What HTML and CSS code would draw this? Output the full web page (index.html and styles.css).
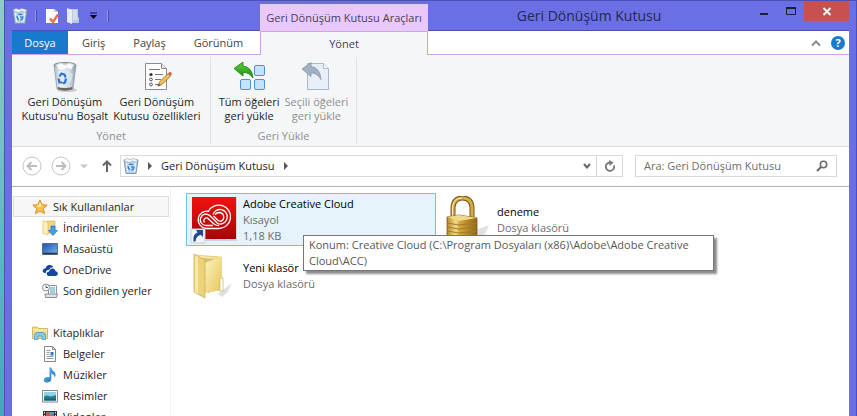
FILE: index.html
```html
<!DOCTYPE html>
<html lang="tr">
<head>
    <meta charset="UTF-8">
    <meta name="viewport" content="width=device-width, initial-scale=1.0">
    <title>Geri Dönüşüm Kutusu</title>
    <link rel="stylesheet" href="styles.css">
</head>
<body>

    <svg class="defs" aria-hidden="true">
        <defs>
            <linearGradient id="glass" x1="0" y1="0" x2="1" y2="0">
                <stop offset="0" stop-color="#a9b6c0"/>
                <stop offset=".3" stop-color="#eef4f8"/>
                <stop offset=".7" stop-color="#cfdde8"/>
                <stop offset="1" stop-color="#8d9aa5"/>
            </linearGradient>
            <linearGradient id="red" x1="0" y1="0" x2="0" y2="1">
                <stop offset="0" stop-color="#f0130f"/>
                <stop offset="1" stop-color="#a80507"/>
            </linearGradient>
            <linearGradient id="gold" x1="0" y1="0" x2="1" y2="0">
                <stop offset="0" stop-color="#b98a2c"/>
                <stop offset=".3" stop-color="#f3dc8c"/>
                <stop offset=".42" stop-color="#d3a63e"/>
                <stop offset="1" stop-color="#8f6418"/>
            </linearGradient>
            <linearGradient id="folder" x1="0" y1="0" x2="1" y2="1">
                <stop offset="0" stop-color="#fdf3bd"/>
                <stop offset="1" stop-color="#e6c65f"/>
            </linearGradient>
            <linearGradient id="green" x1="0" y1="0" x2="0" y2="1">
                <stop offset="0" stop-color="#5fd03a"/>
                <stop offset="1" stop-color="#1c8c12"/>
            </linearGradient>
            <linearGradient id="screen" x1="0" y1="0" x2="1" y2="1">
                <stop offset="0" stop-color="#1c4fb0"/>
                <stop offset="1" stop-color="#7db4ee"/>
            </linearGradient>
            <linearGradient id="note" x1="0" y1="0" x2="1" y2="1">
                <stop offset="0" stop-color="#6cc4f2"/>
                <stop offset="1" stop-color="#1668b8"/>
            </linearGradient>
            <symbol id="bin" viewBox="0 0 16 16">
                <path d="M1 2h14l-2 13.500H3z" fill="#b5d3ea" stroke="#7d95a8"/>
                <path d="M1 2l3-1.500 3 1L10 .5l5 1.500-2.500 2-3-1-3 1.500L3 3.500z" fill="#f4f8fb" stroke="#93a5b3" stroke-width=".6"/>
                <path d="M3.500 5l1 9M12.500 5l-1 9" stroke="#eaf4fb" stroke-width="1.200"/>
                <circle cx="8" cy="9" r="2.800" fill="#d8e9f6" stroke="#3a7fd6" stroke-width="1.500" stroke-dasharray="4 1.500"/>
                <path d="M8 9h2" stroke="#3a7fd6" stroke-width="1.500"/>
            </symbol>
        </defs>
    </svg>

    <div class="window">
        <header class="top">
            <div class="quick">
                <svg class="icon" viewBox="0 0 16 16"><use href="#bin"/></svg>
                <span class="bar"></span>
                <button type="button" aria-label="Özellikler">
                    <svg class="icon" viewBox="0 0 16 16"><path d="M2 1h8l4 3v11H2z" fill="#fdfdfd"/><path d="M10 1v3h4z" fill="#c9cbd8"/><path d="M6 10.500l3 3.500 5-7.500" fill="none" stroke="#ea7140" stroke-width="2.500"/></svg>
                </button>
                <button type="button" aria-label="Yeni klasör">
                    <svg class="icon" viewBox="0 0 16 16"><path d="M5 1h9v8l1 1v5H5z" fill="#b9cbe0"/><path d="M3 0l5 2v14l-5-2z" fill="#e6edf5"/><path d="M9 2h4v10H9z" fill="#d2deeb"/></svg>
                </button>
                <button type="button" class="more" aria-label="Hızlı erişimi özelleştir">
                    <svg class="arrow" viewBox="0 0 9 8"><path d="M1 1h7" stroke="#16163a"/><path d="M1 3h7L4.500 7z" fill="#000"/></svg>
                </button>
                <span class="bar"></span>
            </div>
            <div class="context">Geri Dönüşüm Kutusu Araçları</div>
            <div class="caption">
                <h1>Geri Dönüşüm Kutusu</h1>
                <div class="controls">
                    <button type="button" class="ctl" aria-label="Simge durumuna küçült"><svg class="glyph" viewBox="0 0 12 12"><path d="M2 9h8" stroke="#1d1d3c" stroke-width="2"/></svg></button>
                    <button type="button" class="ctl" aria-label="Ekranı kapla"><svg class="glyph" viewBox="0 0 12 12"><path d="M1.500 3v6.500h9V2.500h-9" fill="none" stroke="#1d1d3c"/><path d="M1 3h10" stroke="#1d1d3c" stroke-width="2"/></svg></button>
                    <button type="button" class="ctl close" aria-label="Kapat"><svg class="glyph" viewBox="0 0 12 12"><path d="M2.500 3l7 7M9.500 3l-7 7" stroke="#fff" stroke-width="1.800"/></svg></button>
                </div>
            </div>
            <nav class="tabs">
                <button type="button" class="tab file">Dosya</button>
                <button type="button" class="tab">Giriş</button>
                <button type="button" class="tab">Paylaş</button>
                <button type="button" class="tab">Görünüm</button>
            </nav>
            <button type="button" class="tab active">Yönet</button>
            <div class="tools">
                <button type="button" aria-label="Şeridi simge durumuna küçült"><svg class="chevron" viewBox="0 0 10 8"><path d="M1 6.500l4-4 4 4" fill="none" stroke="#8a8a8a" stroke-width="2"/></svg></button>
                <button type="button" class="help" aria-label="Yardım">?</button>
            </div>
        </header>

        <section class="ribbon">
            <div class="group">
                <div class="actions">
                    <button type="button" class="action">
                        <svg class="big" viewBox="0 0 32 32">
                            <ellipse cx="18" cy="29" rx="10" ry="2" fill="#c9cdd1"/>
                            <path d="M5 4h22l-3 24q-8 3-16 0z" fill="url(#glass)" stroke="#8f9ba5" stroke-width=".7"/>
                            <ellipse cx="16" cy="4" rx="11" ry="2.500" fill="#b7c3cc" stroke="#84919b"/>
                            <path d="M7 4l5-2 4 2 4-2 5 2-3 5-4-2-5 3-4-2z" fill="#f7fafc" stroke="#c2ced7" stroke-width=".6"/>
                            <path d="M9 11l5 3 4-4 6 3-2 8-5-3-3 5-4-6z" fill="#dde8f0" opacity=".8"/>
                            <path d="M8.500 26q7.500 2 15 0l-.4 2.200q-7 2.400-14.200 0z" fill="#6e6763"/>
                            <path d="M10.500 15.500l2-3 3 1 1 3M9.500 17.500l1 4h3M17 17.500l-1 4-2 1" fill="none" stroke="#2f6fd2" stroke-width="2.200"/>
                        </svg>
                        <span>Geri Dönüşüm<br>Kutusu'nu Boşalt</span>
                    </button>
                    <button type="button" class="action">
                        <svg class="big" viewBox="0 0 32 32">
                            <path d="M4.500 2.500h16l5 5v21h-21z" fill="#fdfdfd" stroke="#8b8b8b"/>
                            <path d="M20.500 2.500v5h5" fill="#e6e6e6" stroke="#8b8b8b"/>
                            <path d="M8 8.500h11M14 13.500h8M14 18.500h6M14 23.500h4" stroke="#777"/>
                            <circle cx="10" cy="13.500" r="1.600" fill="#333"/>
                            <circle cx="10" cy="18.500" r="1.400" fill="#fff" stroke="#555"/>
                            <circle cx="10" cy="23.500" r="1.400" fill="#fff" stroke="#555"/>
                            <path d="M17 25l1.500-4L27 12.500l2.500 2.500L21 23.500z" fill="#f4c257" stroke="#8a6224" stroke-width=".8"/>
                            <path d="M27 12.500l1.500-1.500q1.500-.5 2.500 1.500l-1.500 2.500z" fill="#dc5a55"/>
                            <path d="M17 25l.8-2 1.200 1.200z" fill="#222"/>
                        </svg>
                        <span>Geri Dönüşüm<br>Kutusu özellikleri</span>
                    </button>
                </div>
                <div class="label">Yönet</div>
            </div>
            <div class="group">
                <div class="actions">
                    <button type="button" class="action">
                        <svg class="big" viewBox="0 0 32 32">
                            <g fill="#c5e3fb" stroke="#4d92d6"><rect x="21.500" y="4.500" width="10" height="10" rx="1.500"/><rect x="7.500" y="18.500" width="10" height="10" rx="1.500"/><rect x="21.500" y="18.500" width="10" height="10" rx="1.500"/></g>
                            <path d="M1 7.500L10 1v4q9 1 10 12-4-6-10-5.500V15z" fill="url(#green)" stroke="#1c7d14" stroke-width=".8"/>
                        </svg>
                        <span>Tüm öğeleri<br>geri yükle</span>
                    </button>
                    <button type="button" class="action" disabled>
                        <svg class="big" viewBox="0 0 32 32">
                            <path d="M7.500 2.500h16l5 5v21h-21z" fill="#e9eff8" stroke="#abb8cd"/>
                            <path d="M23.500 2.500v5h5" fill="#f8fafd" stroke="#abb8cd"/>
                            <path d="M2 8L11 1.500v4q9 1 10 13-4-7-10-6.500v3.500z" fill="#a3afc3" stroke="#8794ab" stroke-width=".8"/>
                        </svg>
                        <span>Seçili öğeleri<br>geri yükle</span>
                    </button>
                </div>
                <div class="label">Geri Yükle</div>
            </div>
        </section>

        <div class="navbar">
            <button type="button" aria-label="Geri"><svg class="round" viewBox="0 0 20 20"><circle cx="10" cy="10" r="9" fill="none" stroke="#c6c6c6"/><path d="M15 10H6M9.500 6L5.500 10l4 4" fill="none" stroke="#bdbdbd" stroke-width="2"/></svg></button>
            <button type="button" aria-label="İleri"><svg class="round" viewBox="0 0 20 20"><circle cx="10" cy="10" r="9" fill="none" stroke="#c6c6c6"/><path d="M5 10h9M10.500 6l4 4-4 4" fill="none" stroke="#bdbdbd" stroke-width="2"/></svg></button>
            <button type="button" aria-label="Son konumlar"><svg class="drop" viewBox="0 0 8 8"><path d="M0 2.500h8l-4 4z" fill="#c8c8c8"/></svg></button>
            <button type="button" class="up" aria-label="Yukarı"><svg class="uparrow" viewBox="0 0 10 14"><path d="M5 13V3M1 6.500l4-4 4 4" fill="none" stroke="#666" stroke-width="2"/></svg></button>
            <div class="address">
                <svg class="icon" viewBox="0 0 16 16"><use href="#bin"/></svg>
                <svg class="crumb" viewBox="0 0 6 8"><path d="M1 0l4 4-4 4z" fill="#555"/></svg>
                <a href="#">Geri Dönüşüm Kutusu</a>
                <svg class="crumb" viewBox="0 0 6 8"><path d="M1 0l4 4-4 4z" fill="#555"/></svg>
                <button type="button" class="history" aria-label="Önceki konumlar"><svg class="drop" viewBox="0 0 8 8"><path d="M1 2l3 3.500L7 2" fill="none" stroke="#666" stroke-width="2"/></svg></button>
                <button type="button" class="refresh" aria-label="Yenile"><svg class="glyph" viewBox="0 0 12 12"><path d="M10 5.500A4.200 4.200 0 1 1 6 2.500" fill="none" stroke="#777" stroke-width="1.800"/><path d="M5 0l4.500 2.500L5.500 6z" fill="#777"/></svg></button>
            </div>
            <div class="search">
                <input type="text" aria-label="Ara" placeholder="Ara: Geri Dönüşüm Kutusu">
                <svg class="glyph" viewBox="0 0 12 12"><circle cx="7.500" cy="4.500" r="3.200" fill="none" stroke="#6d6d6d" stroke-width="1.600"/><path d="M5 7L1 11" stroke="#6d6d6d" stroke-width="2.200"/></svg>
            </div>
        </div>

        <div class="content">
            <nav class="sidebar">
                <ul>
                    <li><a href="#" class="root selected"><svg class="icon" viewBox="0 0 16 16"><path d="M8 1l2.100 4.700 5.100.5-3.900 3.400 1.200 5L8 12l-4.500 2.600 1.200-5L.8 6.200l5.100-.5z" fill="#fbc24a" stroke="#e08a26" stroke-linejoin="round"/><path d="M8 3l1.500 3.500L8 8 4 7l2.500-.5z" fill="#fff1b5"/></svg>Sık Kullanılanlar</a></li>
                    <li><a href="#"><svg class="icon" viewBox="0 0 16 16"><path d="M5 1h8v12H5z" fill="#f0d683" stroke="#c9a94d" stroke-width=".6"/><path d="M1 .5l5 2V15l-5-1.500z" fill="#fbf0ba" stroke="#d3b760" stroke-width=".6"/><path d="M9 6h4v4.500h2.500L11 15.500l-4.500-5H9z" fill="#3fa4e4" stroke="#1c71b5" stroke-width=".7"/></svg>İndirilenler</a></li>
                    <li><a href="#"><svg class="icon" viewBox="0 0 16 16"><path d="M.5 2.500h15v11H.5z" fill="url(#screen)" stroke="#586f8c"/><path d="M1 12.500h14" stroke="#24364e" stroke-width="1.500"/></svg>Masaüstü</a></li>
                    <li><a href="#"><svg class="icon" viewBox="0 0 16 16"><path d="M3 11Q.3 10.500.8 8.200 1.400 6.200 3.600 6.300 4.600 2.500 8.300 3q2.300.3 3.200 2.400-3-.3-4.300 2.300-3.600.4-3.400 3.500z" fill="#1447a0"/><path d="M6.500 14q-2-.3-1.900-2.500.4-2 2.500-2 1-3.500 4-3 2.200.5 2.500 2.800 2.300.3 2.300 2.500-.2 2-2.200 2.200z" fill="#1447a0"/></svg>OneDrive</a></li>
                    <li><a href="#"><svg class="icon" viewBox="0 0 16 16"><path d="M6.500 2.500h8v9h-8z" fill="#eef3f7" stroke="#8a949c"/><path d="M8 5h5M8 7h5M8 9h5" stroke="#63a5cf"/><path d="M3 11h12.500l-1 3.500H3.500z" fill="#dfe3e6" stroke="#868d93"/><circle cx="4" cy="4.500" r="3.500" fill="#f5f6f7" stroke="#8b9095"/><path d="M4 2.500v2h2" fill="none" stroke="#555"/></svg>Son gidilen yerler</a></li>
                </ul>
                <ul>
                    <li><a href="#" class="root"><svg class="icon" viewBox="0 0 16 16"><path d="M.5 2h5l1 1.500h9v10H.5z" fill="#f3dd8a" stroke="#c9ab52" stroke-width=".8"/><path d="M1 5h14" stroke="#fdf5c9"/><path d="M2.500 14.500v-4q0-3 3-3h5q3 0 3 3v4h-3.500v-3.500h-4v3.500z" fill="#86cdf0" stroke="#3b93c7" stroke-width=".8"/></svg>Kitaplıklar</a></li>
                    <li><a href="#"><svg class="icon" viewBox="0 0 16 16"><path d="M2.500.5h8l3 3v12h-11z" fill="#fff" stroke="#808890"/><path d="M10.500.5v3h3" fill="none" stroke="#808890"/><path d="M4.500 4.500h4M4.500 6.500h3M4.500 8.500h3M4.500 10.500h7M4.500 12.500h7" stroke="#8f9aa5"/><path d="M8.500 6h3v3.500h-3z" fill="#2f78bd"/></svg>Belgeler</a></li>
                    <li><a href="#"><svg class="icon" viewBox="0 0 16 16"><path d="M7.500.5h1.800q.3 2.300 2.700 4 2.600 2.500.7 6.500.2-3.500-3.400-4.500V12q-.2 3-3.700 3.500-3.800.2-3.900-2.300.3-3 4-3.200l1.800.2z" fill="url(#note)"/></svg>Müzikler</a></li>
                    <li><a href="#"><svg class="icon" viewBox="0 0 16 16"><path d="M.5 2.500h15v11.500H.5z" fill="#fff" stroke="#808890"/><path d="M2 4h12v8.500H2z" fill="#8fd0ef"/><path d="M2 8.500q3-2 6 0 3-.5 6-1.500v5.500H2z" fill="#2c8077"/><path d="M2 10.500h12v2H2z" fill="#1b5c95"/></svg>Resimler</a></li>
                    <li><a href="#"><svg class="icon" viewBox="0 0 16 16"><path d="M1 2h14v12H1z" fill="#2b3138"/><path d="M4 3h8v10H4z" fill="#4b9bd2"/><path d="M4 3h3l2 4 3-3v6H4z" fill="#c35c48"/><path d="M2.500 3v10M13.500 3v10" stroke="#e8edf0" stroke-dasharray="1.500 1.500"/></svg>Videolar</a></li>
                </ul>
            </nav>

            <main class="files">
                <div class="item hover">
                    <svg class="thumb" viewBox="0 0 48 48">
                        <path d="M3 2h44v43H3z" fill="#b9c3c9" opacity=".6"/>
                        <path d="M2 1h44v42H2z" fill="url(#red)"/>
                        <g fill="none" stroke="#fff" stroke-width="1.300">
                            <path d="M16 32.500H29A11.700 11.700 0 1 0 18.500 15.300 8.700 8.700 0 1 0 16 32.500"/>
                            <path d="M23 29.500H16a5.700 5.700 0 1 1 4-9.700l7.500 7.500q1 .8 2.500.8a7.300 7.300 0 1 0-7-9.500"/>
                            <path d="M14.500 26.500a2.800 2.800 0 0 1 3-4.500l6.500 6q2.500 1.800 5 1.700M25 18.500q1.500-2 4.500-2a4.500 4.500 0 0 1 1 8.800q-1.500 0-3-1.300l-4-4"/>
                        </g>
                        <path d="M1 33h14v14H1z" fill="#f2f5f8" stroke="#c6ced6"/>
                        <path d="M3.500 45.500q-1-7.500 4-9L6 34h7v7l-2-2q-5 .5-5.500 6.500z" fill="#1e4b94"/>
                    </svg>
                    <div class="info"><span class="name">Adobe Creative Cloud</span><span>Kısayol</span><span>1,18 KB</span></div>
                </div>
                <div class="item">
                    <svg class="thumb" viewBox="0 0 48 48">
                        <path d="M32 34l13-5-4 9-9 4z" fill="#d9d9d9" opacity=".8"/>
                        <path d="M9 22V11q1-9 9.500-9T28 11v11" fill="none" stroke="#7b5613" stroke-width="5"/>
                        <path d="M9 22V11q1-9 9.500-9T28 11v11" fill="none" stroke="#d5ac49" stroke-width="3"/>
                        <path d="M8.500 22V11q1-9 9.500-9" fill="none" stroke="#fbeeb0"/>
                        <path d="M3 21l12-2 18 3v19l-18 4-12-4z" fill="url(#gold)" stroke="#7b5613" stroke-width=".8"/>
                        <path d="M3 21l12-2 18 3-18 3z" fill="#f0d988"/>
                        <path d="M3 27l12 2 18-2M3 31l12 2 18-2M3 35l12 2 18-2M3 39l12 2 18-2" fill="none" stroke="#a67a26"/>
                    </svg>
                    <div class="info"><span class="name">deneme</span><span>Dosya klasörü</span></div>
                </div>
                <div class="item">
                    <svg class="thumb" viewBox="0 0 48 48">
                        <path d="M28 42l14-11-5 10-5 4z" fill="#c9c9c9" opacity=".6"/>
                        <path d="M5 3l25 2v29l-12 7z" fill="url(#folder)" stroke="#dcc06a" stroke-width=".7"/>
                        <path d="M12 6l14 1v22H14z" fill="#d9c271"/>
                        <path d="M15 11l17-7v34l-17 3z" fill="url(#folder)"/>
                        <path d="M4 2l11 6v38L4 40z" fill="#ecd27a" stroke="#c9ab4e" stroke-width=".7"/>
                        <path d="M5 3l3 2v37l-3-2z" fill="#f8e9a8"/>
                        <path d="M30 26h3v13h-3z" fill="#fff" stroke="#c9b264" stroke-width=".7"/>
                    </svg>
                    <div class="info"><span class="name">Yeni klasör</span><span>Dosya klasörü</span></div>
                </div>
                <div class="tooltip" role="tooltip">Konum: Creative Cloud (C:\Program Dosyaları (x86)\Adobe\Adobe Creative Cloud\ACC)</div>
            </main>
        </div>
    </div>

</body>
</html>
```
FILE: styles.css
```css
* {
    box-sizing: border-box;
}

body {
    margin: 0;
    height: 100vh;
    padding-left: 4px;
    overflow: hidden;
    background: linear-gradient(#8fcdc9, #3fa9bd);
    font-family: "Open Sans", "Noto Sans", sans-serif;
    font-size: 11px;
    line-height: 16px;
    color: #1e1e1e;
}

button {
    font: inherit;
    color: inherit;
    background: none;
    border: none;
    margin: 0;
    padding: 0;
}

a {
    color: inherit;
    text-decoration: none;
}

svg {
    display: block;
    flex: none;
}

.defs {
    position: absolute;
    width: 0;
    height: 0;
}

.icon {
    width: 16px;
    height: 16px;
}

.glyph {
    width: 12px;
    height: 12px;
}

.window {
    display: flex;
    flex-direction: column;
    height: 100%;
    padding: 0 7px;
    background: #6a6fe6;
    border: 1px solid #4c50b4;
    border-bottom: none;
}

/* title bar and tabs */
.top {
    display: grid;
    grid-template-columns: 248px 168px 1fr;
    grid-template-rows: 30px 24px;
    background: linear-gradient(#6a6fe6 29px, #4c50b4 29px, #4c50b4 30px, #fff 30px);
}

.quick {
    display: flex;
    align-items: center;
    gap: 4px;
}

.quick .bar {
    width: 2px;
    height: 12px;
    margin: 0 3px;
    background: #8f96f0;
    border-right: 1px solid #4348a8;
}

.arrow {
    width: 9px;
    height: 8px;
}

.more {
    margin: 0 2px 0 5px;
}

.context {
    margin-top: 3px;
    background: #e9c8fb;
    color: #4b3f58;
    text-align: center;
    line-height: 28px;
    white-space: nowrap;
}

.caption {
    display: flex;
}

.caption h1 {
    flex: 1;
    margin: 0;
    font-size: 14px;
    font-weight: normal;
    line-height: 30px;
    text-align: center;
    color: #26284f;
}

.controls {
    display: flex;
    width: 99px;
}

.ctl {
    display: flex;
    align-items: center;
    justify-content: center;
    width: 27px;
    height: 20px;
}

.close {
    flex: 1;
    background: #c75050;
}

.tabs {
    display: flex;
    border-bottom: 1px solid #d3a0ea;
}

.tab {
    padding: 0 14px;
    line-height: 24px;
    color: #444;
}

.file {
    width: 56px;
    padding: 0;
    background: #1979ca;
    color: #fff;
}

.tab.active {
    background: #f5f6f7;
    border: 1px solid #d3a0ea;
    border-bottom: none;
}

.tools {
    display: flex;
    align-items: center;
    justify-content: flex-end;
    gap: 10px;
    padding-right: 4px;
    border-bottom: 1px solid #d3a0ea;
}

.chevron {
    width: 10px;
    height: 8px;
}

.help {
    width: 14px;
    height: 14px;
    border-radius: 50%;
    background: #1979ca;
    color: #fff;
    font-weight: bold;
    line-height: 14px;
}

/* ribbon */
.ribbon {
    display: flex;
    padding: 2px 0;
    background: #f5f6f7;
    border-bottom: 1px solid #dadbdc;
}

.group {
    display: flex;
    flex-direction: column;
    border-right: 1px solid #e2e3e4;
}

.group:first-child {
    width: 199px;
}

.group:last-child {
    width: 146px;
}

.actions {
    display: flex;
    justify-content: center;
    gap: 5px;
}

.action {
    display: flex;
    flex-direction: column;
    align-items: center;
    gap: 2px;
    padding-top: 4px;
    line-height: 14px;
    white-space: nowrap;
}

.action:disabled,
.label {
    color: #8f8f8f;
}

.big {
    width: 32px;
    height: 32px;
}

.label {
    margin-top: 5px;
    text-align: center;
}

/* address bar */
.navbar {
    display: flex;
    align-items: center;
    height: 40px;
    padding: 0 12px 2px 10px;
    background: #fff;
    border-bottom: 1px solid #b4b4b4;
}

.navbar button {
    margin-right: 9px;
}

.round {
    width: 20px;
    height: 20px;
}

.drop {
    width: 8px;
    height: 8px;
}

.navbar .up {
    margin: 0 8px 0 5px;
}

.uparrow {
    width: 10px;
    height: 14px;
}

.address {
    display: flex;
    align-items: center;
    flex: 1;
    height: 22px;
    padding-left: 2px;
    border: 1px solid #d9d9d9;
}

.crumb {
    width: 6px;
    height: 8px;
    margin: 0 8px;
}

.address .history {
    margin: 0 5px 0 auto;
}

.address .refresh {
    display: flex;
    align-items: center;
    justify-content: center;
    align-self: stretch;
    width: 26px;
    margin: 0;
    border-left: 1px solid #d9d9d9;
}

.search {
    display: flex;
    align-items: center;
    width: 202px;
    height: 22px;
    margin-left: 12px;
    padding: 0 8px;
    border: 1px solid #d9d9d9;
}

.search input {
    flex: 1;
    min-width: 0;
    padding: 0;
    border: none;
    outline: none;
    font: inherit;
}

.search input::placeholder {
    color: #6d6d6d;
}

/* folder tree and files */
.content {
    display: flex;
    flex: 1;
    min-height: 0;
    background: #fff;
}

.sidebar {
    width: 159px;
    padding: 9px 1px 0;
    overflow: hidden;
    border-right: 1px solid #f2f2f2;
}

.sidebar ul {
    list-style: none;
    margin: 0 0 21px;
    padding: 0;
}

.sidebar a {
    display: flex;
    align-items: center;
    gap: 5px;
    height: 21px;
    padding-left: 29px;
    white-space: nowrap;
}

.sidebar .root {
    padding-left: 19px;
}

.sidebar .selected {
    padding-left: 18px;
    background: #f7f7f7;
    border: 1px solid #dedede;
}

.files {
    position: relative;
    display: grid;
    grid-template-columns: 250px 250px;
    grid-auto-rows: 53px;
    align-content: start;
    gap: 3px 4px;
    flex: 1;
    padding: 6px 0 0 15px;
}

.item {
    display: flex;
    align-items: center;
    gap: 5px;
    padding: 0 3px;
    border: 1px solid transparent;
}

.hover {
    background: #e5f3fb;
    border-color: #70c0e7;
}

.thumb {
    width: 48px;
    height: 48px;
}

.info {
    display: flex;
    flex-direction: column;
    color: #6d6d6d;
}

.info .name {
    color: #000;
}

.tooltip {
    position: absolute;
    left: 132px;
    top: 48px;
    width: 411px;
    padding: 1px 5px;
    background: #fff;
    border: 1px solid #767676;
    box-shadow: 3px 3px 2px #8c8c8c;
    color: #575757;
}
```
